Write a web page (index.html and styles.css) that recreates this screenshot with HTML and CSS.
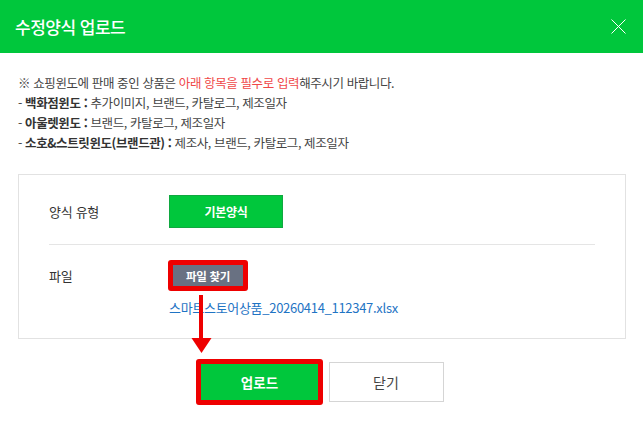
FILE: index.html
```html
<!DOCTYPE html>
<html lang="ko">
<head>
<meta charset="utf-8">
<title>수정양식 업로드</title>
<link rel="stylesheet" href="styles.css">
</head>
<body>
<div class="modal">
  <header class="header">
    <h1 class="title">수정양식 업로드</h1>
    <button class="close-x" aria-label="닫기">
      <svg width="15" height="15" viewBox="0 0 15 15"><path d="M0.5 0.5L14.5 14.5M14.5 0.5L0.5 14.5" stroke="#fff" stroke-width="1" fill="none"/></svg>
    </button>
  </header>
  <div class="content">
    <ul class="notice">
      <li>※ 쇼핑윈도에 판매 중인 상품은 <span class="red">아래 항목을 필수로 입력</span>해주시기 바랍니다.</li>
      <li>- <b>백화점윈도 :</b> 추가이미지, 브랜드, 카탈로그, 제조일자</li>
      <li>- <b>아울렛윈도 :</b> 브랜드, 카탈로그, 제조일자</li>
      <li>- <b>소호&amp;스트릿윈도(브랜드관) :</b> 제조사, 브랜드, 카탈로그, 제조일자</li>
    </ul>
    <div class="box">
      <div class="row row-type">
        <div class="label">양식 유형</div>
        <div class="value"><button class="btn-green-sm">기본양식</button></div>
      </div>
      <div class="row row-file">
        <div class="label">파일</div>
        <div class="value">
          <span class="hl hl-file"><button class="btn-gray">파일 찾기</button></span>
          <a class="file-link" href="#">스마트스토어상품_20260414_112347.xlsx</a>
        </div>
      </div>
    </div>
    <div class="footer">
      <span class="hl hl-upload"><button class="btn-upload">업로드</button></span>
      <button class="btn-close">닫기</button>
    </div>
  </div>
  <svg class="arrow" width="21" height="59" viewBox="0 0 21 59"><rect x="8" y="0" width="4" height="44" fill="#ee0000"/><polygon points="0.5,43 20.5,43 10.5,58" fill="#ee0000"/></svg>
</div>
</body>
</html>
```

FILE: styles.css
```css
* { box-sizing: border-box; }
html, body { margin: 0; padding: 0; background: #fff; }
body {
  font-family: "Noto Sans CJK KR", "Noto Sans", sans-serif;
  color: #333;
}
.modal { position: relative; width: 643px; height: 424px; overflow: hidden; }
.header {
  height: 53px;
  background: #00c73c;
  display: flex;
  align-items: center;
  justify-content: space-between;
  padding: 0 17px 0 15px;
}
.title {
  margin: 0;
  font-size: 17px;
  font-weight: 500;
  color: #fff;
  letter-spacing: -0.5px;
}
.close-x {
  border: 0; background: none; padding: 0; width: 15px; height: 15px; display: block;
}
.close-x svg { display: block; }
.content { padding: 20px 17px 0 18px; }
.notice {
  list-style: none; margin: 0; padding: 0;
  font-size: 12.5px; line-height: 20px; color: #444; letter-spacing: -0.4px;
}
.notice b { font-weight: 700; color: #333; }
.red { color: #f04848; }
.box {
  margin-top: 21px;
  border: 1px solid #e2e2e2;
  padding: 0 30px;
}
.row { display: flex; }
.row-type { padding: 20px 0 16px; align-items: center; border-bottom: 1px solid #e5e5e5; }
.row-file { padding: 20px 0 20px; }
.label { width: 120px; font-size: 13px; color: #333; line-height: 21px; letter-spacing: -0.3px; }
.value { display: flex; flex-direction: column; align-items: flex-start; }
.btn-green-sm {
  width: 114px; height: 33px;
  background: #00c73c; border: 1px solid #10a840;
  color: #fff; font-family: inherit; font-size: 12px; font-weight: 700;
  letter-spacing: -0.3px;
}
.hl { position: relative; display: inline-block; }
.hl::after {
  content: "";
  position: absolute;
  border: 5px solid #ee0000;
  border-radius: 3px;
  pointer-events: none;
}
.hl-file { margin-left: 4px; }
.hl-file::after { top: -5px; left: -5px; right: -5px; bottom: -5px; }
.btn-gray {
  display: block;
  width: 70px; height: 21px; padding: 0;
  background: #697182; border: 0;
  color: #fff; font-family: inherit; font-size: 11.5px; font-weight: 700;
  letter-spacing: -0.3px;
}
.file-link {
  margin-top: 12px;
  font-size: 13px; line-height: 20px;
  color: #1f74c4; text-decoration: none; letter-spacing: -0.3px;
}
.footer {
  display: flex; justify-content: center; gap: 10px;
  padding-top: 23px;
}
.hl-upload::after { top: -3px; left: -5px; right: -4px; bottom: -3px; }
.btn-upload {
  display: block;
  width: 118px; height: 40px;
  background: #00c73c; border: 0;
  color: #fff; font-family: inherit; font-size: 13.5px; font-weight: 700;
}
.btn-close {
  width: 115px; height: 40px;
  background: #fff; border: 1px solid #d5d5d5;
  color: #444; font-family: inherit; font-size: 14px;
}
.arrow { position: absolute; left: 191px; top: 295px; }
```
